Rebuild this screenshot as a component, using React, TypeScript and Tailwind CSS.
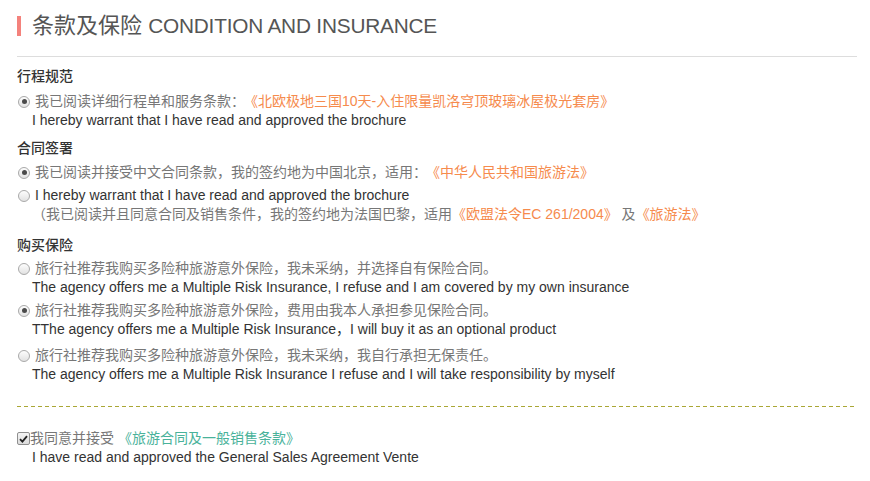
const orange = "text-[#f68b4d]";

function Radio({ checked }: { checked?: boolean }) {
    return (
        <span className="mr-[5px] ml-px flex h-[12px] w-[12px] shrink-0 items-center justify-center rounded-full border border-[#a9a9a9] bg-gradient-to-b from-[#fdfdfd] to-[#e2e2e2]">
            {checked && <span className="h-[5px] w-[5px] rounded-full bg-[#4a4a4a]" />}
        </span>
    )
}

function Option({ checked, cn, en, className = "" }: { checked?: boolean, cn: React.ReactNode, en: string, className?: string }) {
    return (
        <div className={className}>
            <div className="flex h-[19px] items-center leading-[19px] text-[#777]">
                <Radio checked={checked} />
                <span>{cn}</span>
            </div>
            <p className="h-[19px] pl-[15px] leading-[19px] text-[#333]">{en}</p>
        </div>
    )
}

function Heading({ children, className = "" }: { children: React.ReactNode, className?: string }) {
    return <h3 className={"h-[20px] font-medium leading-[20px] text-[#333] " + className}>{children}</h3>
}

export default function App() {
    return (
        <section className="min-h-[481px] w-[870px] bg-white pl-[17px] pr-[13px] text-[14px] font-['Liberation_Sans','Noto_Sans_CJK_SC',sans-serif]">
            <div className="border-b border-[#dddddd] pt-[16px] pb-[20px]">
                <div className="flex h-[20px] items-center">
                    <span className="h-[20px] w-[4px] bg-[#f4827c]" />
                    <h2 className="ml-[11px] text-[22px] leading-[20px] text-[#555]">
                        条款及保险 <span className="text-[20.8px] tracking-[-0.2px]">CONDITION AND INSURANCE</span>
                    </h2>
                </div>
            </div>

            <Heading className="mt-[9px]">行程规范</Heading>
            <Option
                className="mt-[6px]"
                checked
                cn={<>我已阅读详细行程单和服务条款：<span className={orange + " ml-[6px]"}>《北欧极地三国10天-入住限量凯洛穹顶玻璃冰屋极光套房》</span></>}
                en="I hereby warrant that I have read and approved the brochure"
            />

            <Heading className="mt-[8px]">合同签署</Heading>
            <div className="mt-[5px] flex h-[19px] items-center leading-[19px] text-[#777]">
                <Radio checked />
                <span>我已阅读并接受中文合同条款，我的签约地为中国北京，适用：<span className={orange + " ml-[6px]"}>《中华人民共和国旅游法》</span></span>
            </div>
            <div className="mt-[4px] flex h-[19px] items-center leading-[19px] text-[#333]">
                <Radio />
                <span>I hereby warrant that I have read and approved the brochure</span>
            </div>
            <p className="h-[19px] pl-[15px] leading-[19px] text-[#777]">
                （我已阅读并且同意合同及销售条件，我的签约地为法国巴黎，适用<span className={orange}>《欧盟法令EC 261/2004》</span> 及<span className={orange}>《旅游法》</span>
            </p>

            <Heading className="mt-[11px]">购买保险</Heading>
            <Option
                className="mt-[4px]"
                cn="旅行社推荐我购买多险种旅游意外保险，我未采纳，并选择自有保险合同。"
                en="The agency offers me a Multiple Risk Insurance, I refuse and I am covered by my own insurance"
            />
            <Option
                className="mt-[4px]"
                checked
                cn="旅行社推荐我购买多险种旅游意外保险，费用由我本人承担参见保险合同。"
                en="TThe agency offers me a Multiple Risk Insurance，I will buy it as an optional product"
            />
            <Option
                className="mt-[7px]"
                cn="旅行社推荐我购买多险种旅游意外保险，我未采纳，我自行承担无保责任。"
                en="The agency offers me a Multiple Risk Insurance I refuse and I will take responsibility by myself"
            />

            <div className="mt-[22px] h-px bg-[repeating-linear-gradient(to_right,#aaa735_0_4px,transparent_4px_7px)]" />

            <div className="mt-[22px] flex h-[19px] items-center leading-[19px] text-[#777]">
                <span className="flex h-[13px] w-[13px] shrink-0 items-center justify-center rounded-[2px] border border-[#8f8f8f] bg-gradient-to-b from-[#f4f4f4] to-[#dcdcdc]">
                    <svg width="9" height="8" viewBox="0 0 9 8" fill="none">
                        <path d="M1 4.2 L3.4 6.6 L8 1.2" stroke="#222" strokeWidth="1.8" />
                    </svg>
                </span>
                <span>我同意并接受 <span className="text-[#49b29a]">《旅游合同及一般销售条款》</span></span>
            </div>
            <p className="h-[19px] pl-[15px] leading-[19px] text-[#333]">I have read and approved the General Sales Agreement Vente</p>
        </section>
    )
}
